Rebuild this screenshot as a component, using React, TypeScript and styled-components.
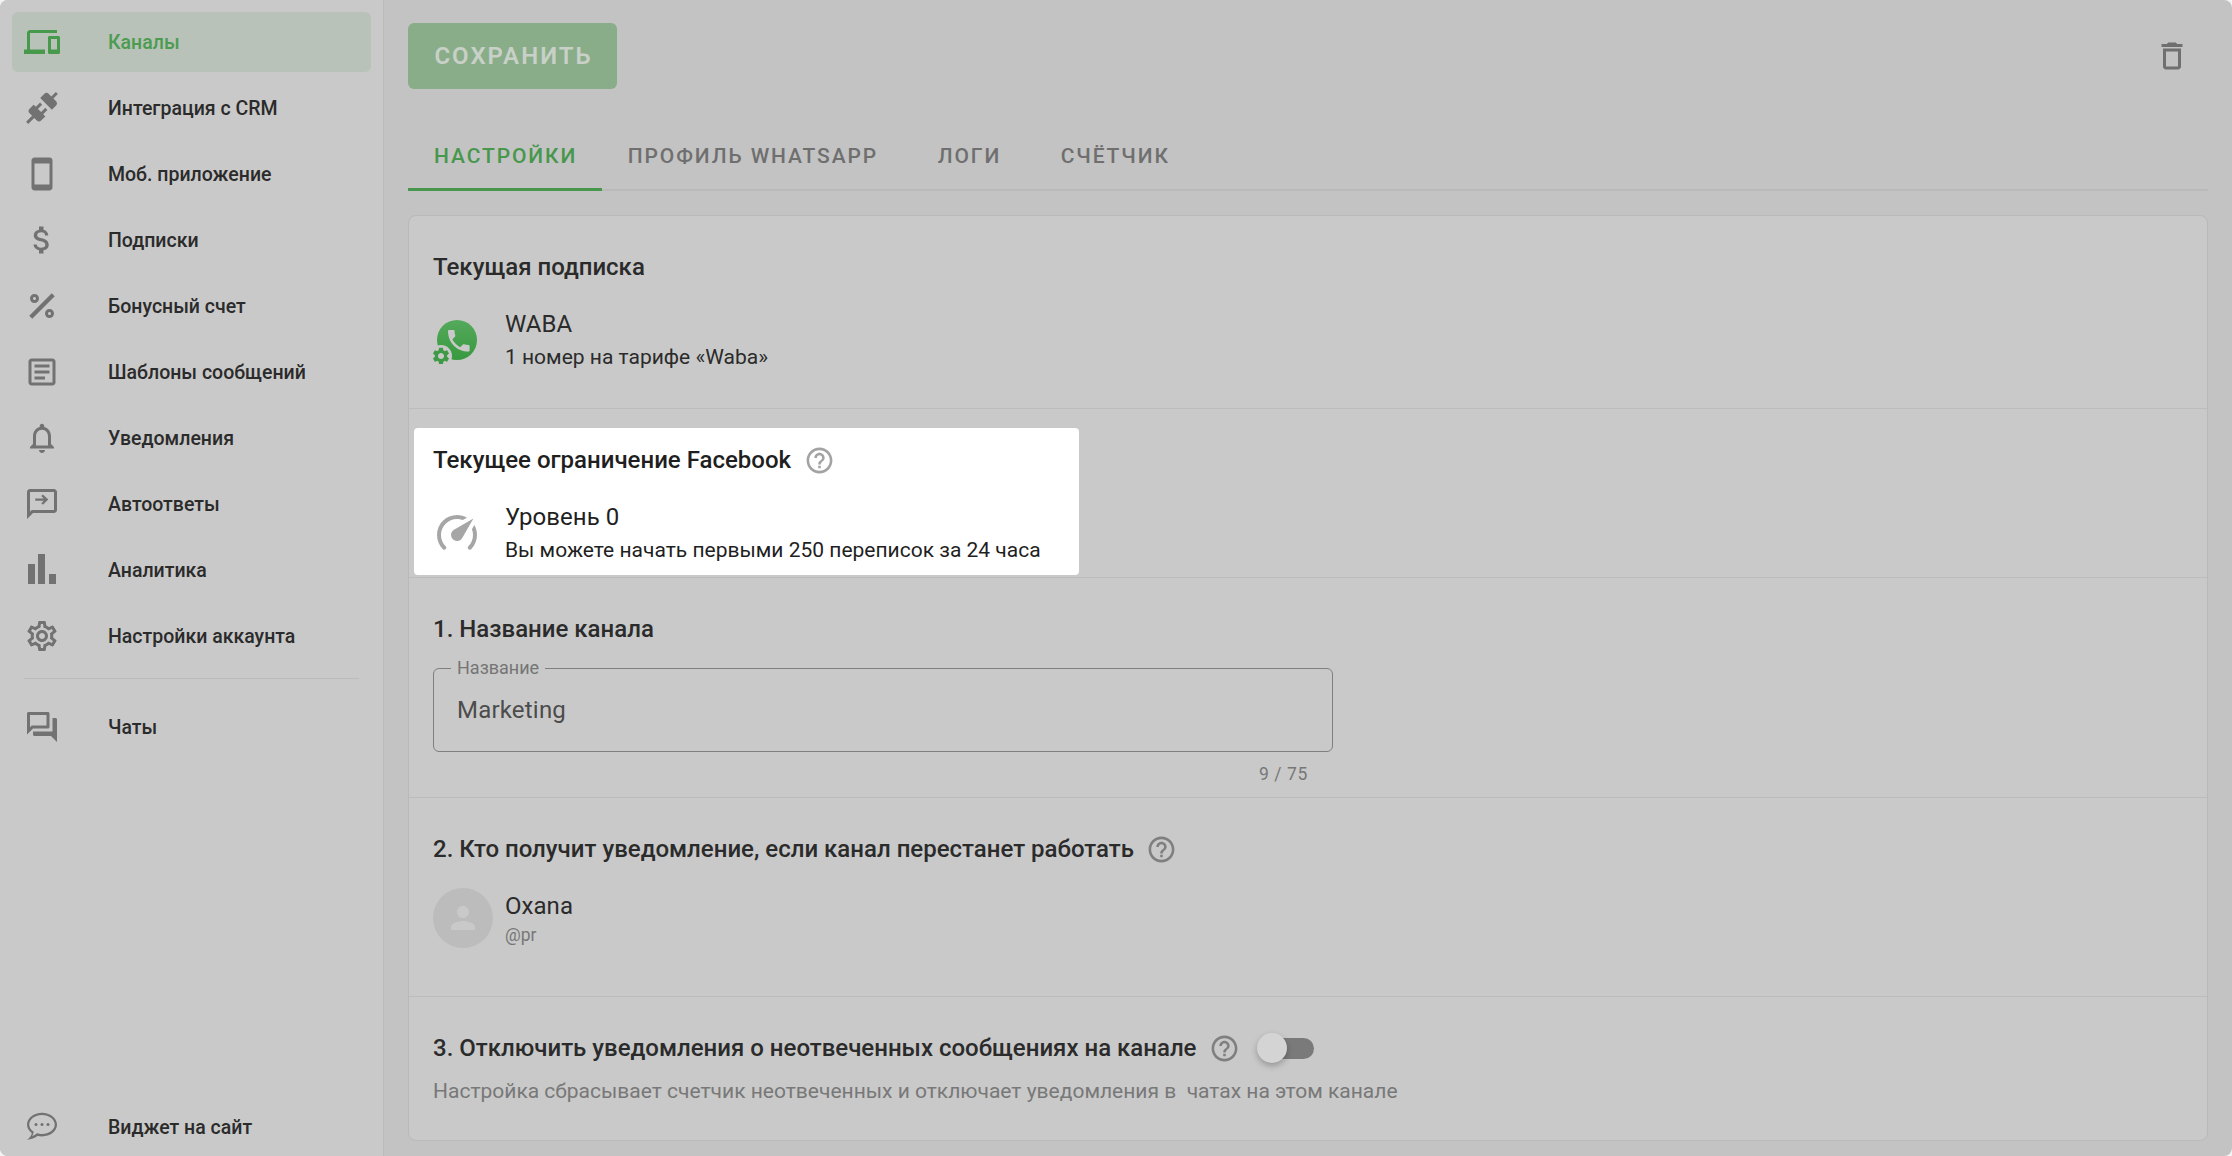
import React, { FC, ReactNode } from "react";
import styled, { createGlobalStyle } from "styled-components";
import {
  MdDevices,
  MdSmartphone,
  MdAttachMoney,
  MdOutlineArticle,
  MdOutlineNotifications,
  MdOutlineSettings,
  MdOutlineForum,
  MdOutlineDelete,
  MdHelpOutline,
  MdPerson,
} from "react-icons/md";

const GlobalStyle = createGlobalStyle`
  html, body {
    margin: 0;
    padding: 0;
    background: #f4f4f4;
  }
  * {
    box-sizing: border-box;
  }
`;

const Frame = styled.div`
  display: flex;
  width: 2232px;
  height: 1156px;
  overflow: hidden;
  border-radius: 8px;
  background: #c3c3c3;
  font-family: Roboto, "Liberation Sans", sans-serif;
  color: #2b2b2b;
`;

const Sidebar = styled.nav`
  display: flex;
  flex-direction: column;
  flex: 0 0 384px;
  height: 1156px;
  padding-top: 12px;
  background: #c9c9c9;
  border-right: 1px solid #bbbbbb;
`;

const NavItem = styled.div<{ $active?: boolean }>`
  display: flex;
  flex: 0 0 60px;
  align-items: center;
  gap: 48px;
  width: 359px;
  height: 60px;
  margin: 0 0 6px 12px;
  padding-left: 12px;
  border-radius: 6px;
  font-size: 19.5px;
  font-weight: 500;
  background: ${(p) => (p.$active ? "#b9c2b8" : "transparent")};
  color: ${(p) => (p.$active ? "#4b9c50" : "#2b2b2b")};
`;

const NavIcon = styled.span<{ $active?: boolean }>`
  display: flex;
  width: 36px;
  height: 36px;
  color: ${(p) => (p.$active ? "#47994c" : "#727272")};
  svg {
    width: 36px;
    height: 36px;
    fill: currentColor;
  }
`;

const NavDivider = styled.div`
  flex: 0 0 1px;
  width: 335px;
  margin: 6px 0 18px 24px;
  background: #bbbbbb;
`;

const NavFooter = styled.div`
  flex: 0 0 auto;
  margin-top: auto;
  margin-bottom: -7px;
`;

const Main = styled.main`
  flex: 1;
  min-width: 0;
  padding: 23px 24px 0;
`;

const Toolbar = styled.div`
  display: flex;
  align-items: center;
  justify-content: space-between;
  height: 66px;
`;

const SaveButton = styled.div`
  display: flex;
  align-items: center;
  justify-content: center;
  width: 209px;
  height: 66px;
  padding-left: 2px;
  border-radius: 6px;
  background: #89ad89;
  color: #c8d0c8;
  font-size: 24px;
  font-weight: 600;
  letter-spacing: 2px;
`;

const TrashIcon = styled.span`
  display: flex;
  margin-right: 18px;
  color: #6f6f6f;
  font-size: 36px;
`;

const Tabs = styled.div`
  display: flex;
  height: 70px;
  margin-top: 32px;
  border-bottom: 2px solid #bababa;
`;

const Tab = styled.div<{ $active?: boolean }>`
  display: flex;
  align-items: center;
  justify-content: center;
  height: 70px;
  min-width: 132px;
  padding: 3px 24.5px 0 26px;
  font-size: 21px;
  font-weight: 500;
  letter-spacing: 1.9px;
  color: ${(p) => (p.$active ? "#47974c" : "#6f6f6f")};
  border-bottom: 3px solid ${(p) => (p.$active ? "#47974c" : "transparent")};
`;

const Card = styled.div`
  height: 926px;
  margin-top: 24px;
  border: 1px solid #b9b9b9;
  border-radius: 8px;
  background: #c9c9c9;
`;

const Section = styled.section<{ $noBorder?: boolean }>`
  padding: 36px 24px 0;
  border-bottom: ${(p) => (p.$noBorder ? "none" : "1px solid #bcbcbc")};
`;

const PlanSection = styled(Section)`
  height: 193px;
`;

const LimitSection = styled(Section)`
  height: 169px;
  padding: 19px 0 0 5px;
`;

const NameSection = styled(Section)`
  height: 220px;
`;

const ContactSection = styled(Section)`
  height: 199px;
`;

const MuteSection = styled(Section)`
  height: 143px;
`;

const Highlight = styled.div`
  width: 665px;
  height: 147px;
  padding: 17px 19px 0;
  border-radius: 4px;
  background: #ffffff;
  color: #1f1f1f;
`;

const TitleRow = styled.div`
  display: flex;
  align-items: center;
  height: 30px;
`;

const Title = styled.h3`
  margin: 0;
  font-size: 24px;
  font-weight: 500;
  line-height: 30px;
`;

const HelpIcon = styled.span<{ $light?: boolean }>`
  display: flex;
  margin-left: 12.5px;
  font-size: 31px;
  color: ${(p) => (p.$light ? "#a3a3a3" : "#7f7f7f")};
`;

const InfoRow = styled.div`
  display: flex;
  align-items: center;
  gap: 24px;
  margin-top: 26px;
`;

const RowIcon = styled.svg`
  flex: 0 0 48px;
  width: 48px;
  height: 48px;
`;

const InfoText = styled.div`
  display: flex;
  flex-direction: column;
`;

const InfoName = styled.div`
  font-size: 24px;
  line-height: 32px;
  letter-spacing: 0.05px;
`;

const InfoSub = styled.div`
  margin-top: 3px;
  font-size: 21px;
  line-height: 28px;
`;

const InputBox = styled.div`
  position: relative;
  display: flex;
  align-items: center;
  width: 900px;
  height: 84px;
  margin-top: 24px;
  padding: 0 23px;
  border: 1px solid #7f7f7f;
  border-radius: 6px;
  font-size: 24px;
  letter-spacing: 0.2px;
  color: #4c4c4c;
`;

const InputLabel = styled.span`
  position: absolute;
  top: -11px;
  left: 17px;
  padding: 0 6px;
  background: #c9c9c9;
  color: #757575;
  font-size: 18px;
  letter-spacing: 0;
  line-height: 20px;
`;

const Counter = styled.div`
  width: 900px;
  margin-top: 12px;
  padding-right: 25px;
  text-align: right;
  font-size: 17.5px;
  line-height: 20px;
  letter-spacing: 0.6px;
  color: #777777;
`;

const Avatar = styled.div`
  display: flex;
  flex: 0 0 60px;
  align-items: center;
  justify-content: center;
  width: 60px;
  height: 60px;
  border-radius: 50%;
  background: #bcbcbc;
  color: #c9c9c9;
  font-size: 36px;
`;

const ContactRow = styled.div`
  display: flex;
  align-items: center;
  gap: 12px;
  margin-top: 24px;
`;

const ContactHandle = styled.div`
  margin-top: 1px;
  font-size: 17.5px;
  line-height: 24px;
  color: #777777;
`;

const Toggle = styled.div`
  position: relative;
  width: 49px;
  height: 21px;
  margin-left: 25px;
  border-radius: 11px;
  background: #7a7a7a;
`;

const ToggleThumb = styled.span`
  position: absolute;
  top: -5px;
  left: -8px;
  width: 30px;
  height: 30px;
  border-radius: 50%;
  background: #d4d4d4;
  box-shadow: 0 3px 6px rgba(0, 0, 0, 0.25);
`;

const Hint = styled.div`
  margin-top: 14px;
  font-size: 21px;
  line-height: 28px;
  color: #787878;
  white-space: pre;
`;

const PlugIcon = () => (
  <svg viewBox="0 0 24 24">
    <path d="M21.4 7.5C22.2 8.3 22.2 9.6 21.4 10.3L18.6 13.1L10.8 5.3L13.6 2.5C14.4 1.7 15.7 1.7 16.4 2.5L18.2 4.3L21.2 1.3L22.6 2.7L19.6 5.7L21.4 7.5M15.6 13.3L14.2 11.9L11.4 14.7L9.3 12.6L12.1 9.8L10.7 8.4L7.9 11.2L6.4 9.8L3.6 12.6C2.8 13.4 2.8 14.7 3.6 15.4L5.4 17.2L1.4 21.2L2.8 22.6L6.8 18.6L8.6 20.4C9.4 21.2 10.7 21.2 11.4 20.4L14.2 17.6L12.8 16.2L15.6 13.3Z" />
  </svg>
);

const PercentIcon = () => (
  <svg viewBox="0 0 24 24">
    <path d="M18.5 3.5L20.5 5.5L5.5 20.5L3.5 18.5L18.5 3.5M7 4C8.66 4 10 5.34 10 7C10 8.66 8.66 10 7 10C5.34 10 4 8.66 4 7C4 5.34 5.34 4 7 4M7 6C6.45 6 6 6.45 6 7C6 7.55 6.45 8 7 8C7.55 8 8 7.55 8 7C8 6.45 7.55 6 7 6M17 14C18.66 14 20 15.34 20 17C20 18.66 18.66 20 17 20C15.34 20 14 18.66 14 17C14 15.34 15.34 14 17 14M17 16C16.45 16 16 16.45 16 17C16 17.55 16.45 18 17 18C17.55 18 18 17.55 18 17C18 16.45 17.55 16 17 16Z" />
  </svg>
);

const AutoReplyIcon = () => (
  <svg viewBox="0 0 24 24">
    <path d="M20 2H4c-1.1 0-2 .9-2 2v18l4-4h14c1.1 0 2-.9 2-2V4c0-1.1-.9-2-2-2zm0 14H5.17L4 17.17V4h16v12z" />
    <path d="M12.6 5.6l-1.1 1.1 1.7 1.6H7.5v1.5h5.7l-1.7 1.7 1.1 1 3.6-3.5z" />
  </svg>
);

const BarsIcon = () => (
  <svg viewBox="0 0 24 24">
    <path d="M2.67 8h4.66v13.33H2.67zM9.33 1.33H14v20H9.33zM16.67 14.67h4.66v6.66h-4.66z" />
  </svg>
);

const WidgetIcon = () => (
  <svg viewBox="0 0 24 24">
    <path d="M12 2.5C6.6 2.5 2 5.9 2 10.4c0 2.3 1.2 4.3 3.2 5.7-.3 1.5-1.2 2.9-3.2 4.4 2.9-.2 5.3-1.1 6.9-2.5 1 .2 2 .3 3.1.3 5.4 0 10-3.4 10-7.9S17.4 2.5 12 2.5zm0 14.2c-1.1 0-2.1-.1-3.4-.5-1.1 1-2 1.5-3.2 1.9.6-.9 1-2 1.1-2.9-2-1.1-3-2.9-3-4.8C3.5 6.9 7.3 4 12 4s8.5 2.9 8.5 6.4-3.8 6.3-8.5 6.3z" />
    <circle cx="8" cy="10.4" r="1" />
    <circle cx="12" cy="10.4" r="1" />
    <circle cx="16" cy="10.4" r="1" />
  </svg>
);

const WabaLogo = () => (
  <RowIcon viewBox="0 0 48 48">
    <defs>
      <linearGradient id="waba" x1="0" y1="0" x2="0" y2="1">
        <stop offset="0" stopColor="#55a95c" />
        <stop offset="1" stopColor="#38993f" />
      </linearGradient>
    </defs>
    <circle cx="24" cy="24" r="20" fill="url(#waba)" />
    <circle cx="8" cy="40" r="11" fill="#c9c9c9" />
    <path
      transform="translate(11.4 10.4) scale(1.2)"
      fill="#c9c9c9"
      d="M6.62 10.79c1.44 2.83 3.76 5.14 6.59 6.59l2.2-2.2c.27-.27.67-.36 1.02-.24 1.12.37 2.33.57 3.57.57.55 0 1 .45 1 1V20c0 .55-.45 1-1 1-9.39 0-17-7.61-17-17 0-.55.45-1 1-1h3.5c.55 0 1 .45 1 1 0 1.25.2 2.45.57 3.57.11.35.03.74-.25 1.02l-2.2 2.2z"
    />
    <path
      transform="translate(-2.2 29.8) scale(0.85)"
      fill="#3f9a45"
      fillRule="evenodd"
      d="M19.14 12.94c.04-.3.06-.61.06-.94s-.02-.64-.07-.94l2.03-1.58c.18-.14.23-.41.12-.61l-1.92-3.32c-.12-.22-.37-.29-.59-.22l-2.39.96c-.5-.38-1.03-.7-1.62-.94l-.36-2.54c-.04-.24-.24-.41-.48-.41h-3.84c-.24 0-.43.17-.47.41l-.36 2.54c-.59.24-1.13.57-1.62.94l-2.39-.96c-.22-.08-.47 0-.59.22L2.74 8.87c-.12.21-.08.47.12.61l2.03 1.58c-.05.3-.09.63-.09.94s.02.64.07.94l-2.03 1.58c-.18.14-.23.41-.12.61l1.92 3.32c.12.22.37.29.59.22l2.39-.96c.5.38 1.03.7 1.62.94l.36 2.54c.05.24.24.41.48.41h3.84c.24 0 .44-.17.47-.41l.36-2.54c.59-.24 1.13-.56 1.62-.94l2.39.96c.22.08.47 0 .59-.22l1.92-3.32c.12-.22.07-.47-.12-.61l-2.01-1.58zM12 15.6c-1.98 0-3.6-1.62-3.6-3.6s1.62-3.6 3.6-3.6 3.6 1.62 3.6 3.6-1.62 3.6-3.6 3.6z"
    />
  </RowIcon>
);

const SpeedIcon = () => (
  <RowIcon viewBox="0 0 24 24">
    <path
      fill="#a6a6a6"
      d="M12,16A3,3 0 0,1 9,13C9,11.88 9.61,10.9 10.5,10.39L20.21,4.77L14.68,14.35C14.18,15.33 13.17,16 12,16M12,3C13.81,3 15.5,3.5 16.97,4.32L14.87,5.53C14,5.19 13,5 12,5A8,8 0 0,0 4,13C4,15.21 4.89,17.21 6.34,18.65H6.35C6.74,19.04 6.74,19.67 6.35,20.06C5.96,20.45 5.32,20.45 4.93,20.07V20.07C3.12,18.26 2,15.76 2,13A10,10 0 0,1 12,3M22,13C22,15.76 20.88,18.26 19.07,20.07V20.07C18.68,20.45 18.05,20.45 17.66,20.06C17.27,19.67 17.27,19.04 17.66,18.65V18.65C19.11,17.2 20,15.21 20,13C20,12 19.81,11 19.46,10.1L20.67,8C21.5,9.5 22,11.18 22,13Z"
    />
  </RowIcon>
);

type NavEntry = { label: string; icon: ReactNode; active?: boolean };

const topNav: NavEntry[] = [
  { label: "Каналы", icon: <MdDevices />, active: true },
  { label: "Интеграция с CRM", icon: <PlugIcon /> },
  { label: "Моб. приложение", icon: <MdSmartphone /> },
  { label: "Подписки", icon: <MdAttachMoney /> },
  { label: "Бонусный счет", icon: <PercentIcon /> },
  { label: "Шаблоны сообщений", icon: <MdOutlineArticle /> },
  { label: "Уведомления", icon: <MdOutlineNotifications /> },
  { label: "Автоответы", icon: <AutoReplyIcon /> },
  { label: "Аналитика", icon: <BarsIcon /> },
  { label: "Настройки аккаунта", icon: <MdOutlineSettings /> },
];

const renderNav = ({ label, icon, active }: NavEntry) => (
  <NavItem key={label} $active={active}>
    <NavIcon $active={active}>{icon}</NavIcon>
    {label}
  </NavItem>
);

const App: FC = () => (
  <Frame>
    <GlobalStyle />
    <Sidebar>
      {topNav.map(renderNav)}
      <NavDivider />
      {renderNav({ label: "Чаты", icon: <MdOutlineForum /> })}
      <NavFooter>
        <NavDivider />
        {renderNav({ label: "Виджет на сайт", icon: <WidgetIcon /> })}
      </NavFooter>
    </Sidebar>
    <Main>
      <Toolbar>
        <SaveButton>СОХРАНИТЬ</SaveButton>
        <TrashIcon>
          <MdOutlineDelete />
        </TrashIcon>
      </Toolbar>
      <Tabs>
        <Tab $active>НАСТРОЙКИ</Tab>
        <Tab>ПРОФИЛЬ WHATSAPP</Tab>
        <Tab>ЛОГИ</Tab>
        <Tab>СЧЁТЧИК</Tab>
      </Tabs>
      <Card>
        <PlanSection>
          <Title>Текущая подписка</Title>
          <InfoRow>
            <WabaLogo />
            <InfoText>
              <InfoName>WABA</InfoName>
              <InfoSub>1 номер на тарифе «Waba»</InfoSub>
            </InfoText>
          </InfoRow>
        </PlanSection>
        <LimitSection>
          <Highlight>
            <TitleRow>
              <Title>Текущее ограничение Facebook</Title>
              <HelpIcon $light>
                <MdHelpOutline />
              </HelpIcon>
            </TitleRow>
            <InfoRow>
              <SpeedIcon />
              <InfoText>
                <InfoName>Уровень 0</InfoName>
                <InfoSub>Вы можете начать первыми 250 переписок за 24 часа</InfoSub>
              </InfoText>
            </InfoRow>
          </Highlight>
        </LimitSection>
        <NameSection>
          <Title>1. Название канала</Title>
          <InputBox>
            <InputLabel>Название</InputLabel>
            Marketing
          </InputBox>
          <Counter>9 / 75</Counter>
        </NameSection>
        <ContactSection>
          <TitleRow>
            <Title>2. Кто получит уведомление, если канал перестанет работать</Title>
            <HelpIcon>
              <MdHelpOutline />
            </HelpIcon>
          </TitleRow>
          <ContactRow>
            <Avatar>
              <MdPerson />
            </Avatar>
            <InfoText>
              <InfoName>Oxana</InfoName>
              <ContactHandle>@pr</ContactHandle>
            </InfoText>
          </ContactRow>
        </ContactSection>
        <MuteSection $noBorder>
          <TitleRow>
            <Title>3. Отключить уведомления о неотвеченных сообщениях на канале</Title>
            <HelpIcon>
              <MdHelpOutline />
            </HelpIcon>
            <Toggle>
              <ToggleThumb />
            </Toggle>
          </TitleRow>
          <Hint>Настройка сбрасывает счетчик неотвеченных и отключает уведомления в  чатах на этом канале</Hint>
        </MuteSection>
      </Card>
    </Main>
  </Frame>
);

export default App;
